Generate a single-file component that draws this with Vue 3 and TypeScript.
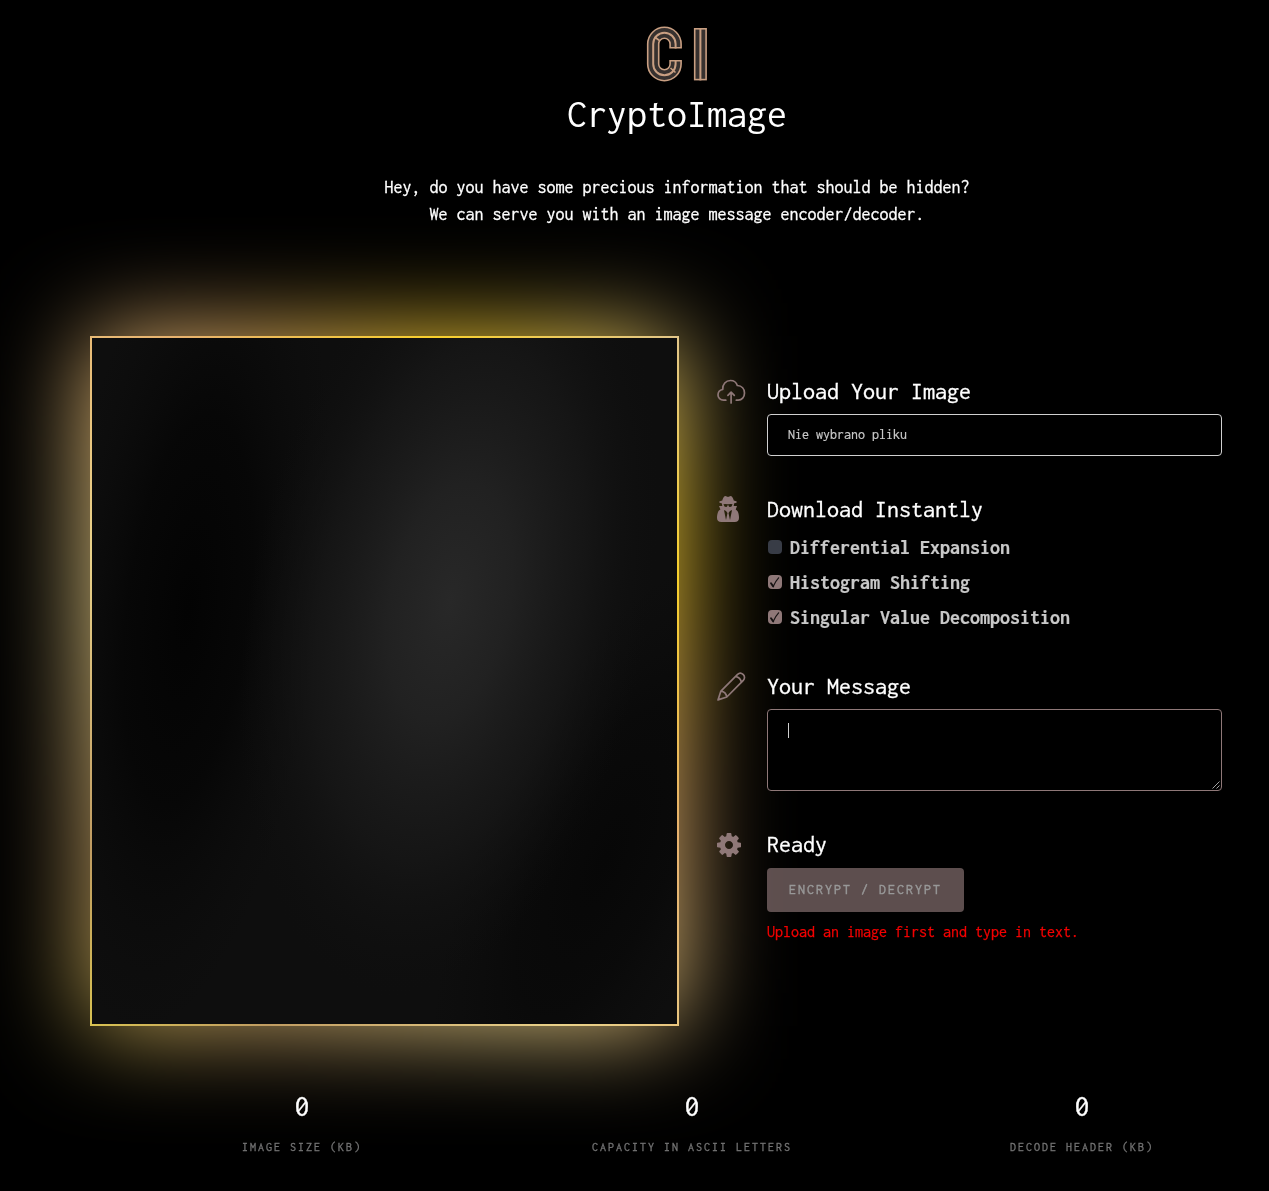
<script setup lang="ts">
import { ref } from 'vue'

interface Method {
  label: string
  checked: boolean
}

interface Stat {
  value: number
  label: string
}

const methods = ref<Method[]>([
  { label: 'Differential Expansion', checked: false },
  { label: 'Histogram Shifting', checked: true },
  { label: 'Singular Value Decomposition', checked: true },
])

const stats: Stat[] = [
  { value: 0, label: 'Image size (KB)' },
  { value: 0, label: 'Capacity in ASCII letters' },
  { value: 0, label: 'Decode header (KB)' },
]
</script>

<template>
  <div class="page">
    <header class="hero">
      <svg class="logo" width="64" height="58" viewBox="0 0 64 58" fill="none">
        <g stroke="#c99f82">
          <path d="M29.6 23.5V19A11.2 11.2 0 0 0 7.2 19V39A11.2 11.2 0 0 0 29.6 39V35" stroke-width="12.6" />
          <path d="M54.4 3V55.4" stroke-width="13" />
        </g>
        <g stroke="#37312f">
          <path d="M29.6 22V19A11.2 11.2 0 0 0 7.2 19V39A11.2 11.2 0 0 0 29.6 39V36.5" stroke-width="9.4" />
          <path d="M54.4 4.6V53.8" stroke-width="9.8" />
        </g>
        <g stroke="#c99f82" stroke-width="2">
          <path d="M29.6 23.5V19A11.2 11.2 0 0 0 7.2 19V39A11.2 11.2 0 0 0 29.6 39V35" />
          <path d="M54.4 3V55.4" />
          <path d="M8.5 12L13.5 15.5M24.5 43L29.5 47.5" stroke-width="1.6" />
        </g>
      </svg>
      <h1>CryptoImage</h1>
      <p>Hey, do you have some precious information that should be hidden?<br>We can serve you with an image message encoder/decoder.</p>
    </header>

    <main class="workspace">
      <div class="frame">
        <svg class="preview" width="585" height="686" viewBox="92 338 585 686">
          <defs>
            <radialGradient id="shine" gradientUnits="userSpaceOnUse" cx="0" cy="0" r="1" gradientTransform="translate(450 602) rotate(11) scale(200 400)">
              <stop offset="0" stop-color="#282828" />
              <stop offset=".3" stop-color="#212121" />
              <stop offset=".65" stop-color="#171717" stop-opacity=".8" />
              <stop offset="1" stop-color="#0f0f0f" stop-opacity="0" />
            </radialGradient>
            <radialGradient id="shadeLeft" gradientUnits="userSpaceOnUse" cx="0" cy="0" r="1" gradientTransform="translate(188 610) rotate(7) scale(135 430)">
              <stop offset="0" stop-color="#030303" />
              <stop offset=".45" stop-color="#050505" stop-opacity=".8" />
              <stop offset="1" stop-color="#0b0b0b" stop-opacity="0" />
            </radialGradient>
            <radialGradient id="shadeRight" gradientUnits="userSpaceOnUse" cx="0" cy="0" r="1" gradientTransform="translate(605 860) rotate(24) scale(125 330)">
              <stop offset="0" stop-color="#070707" />
              <stop offset=".5" stop-color="#080808" stop-opacity=".7" />
              <stop offset="1" stop-color="#0b0b0b" stop-opacity="0" />
            </radialGradient>
          </defs>
          <rect x="92" y="338" width="585" height="686" fill="#0e0e0e" />
          <rect x="92" y="338" width="585" height="686" fill="url(#shadeLeft)" />
          <rect x="92" y="338" width="585" height="686" fill="url(#shadeRight)" />
          <rect x="92" y="338" width="585" height="686" fill="url(#shine)" />
        </svg>
      </div>

      <div class="steps">
        <section class="step upload">
          <svg class="icon" width="29" height="28" viewBox="0 0 29 28" fill="none" stroke="#8f7878" stroke-width="1.7" stroke-linecap="round" stroke-linejoin="round">
            <path d="M8.8 22.2H6.5C3.3 22.2 1 19.8 1 16.9 1 14.2 3 12 5.7 11.5 5.4 6.3 8.9 2.5 13.4 2.5 16.9 2.5 19.4 4.4 20.3 7.5 24.8 7.8 27.5 10.9 27.5 15 27.5 19.2 24.8 22.2 21.2 22.2H19.3M14.1 25V14.3M10.9 17.3L14.1 14.1 17.3 17.3" />
          </svg>
          <div class="body">
            <h2>Upload Your Image</h2>
            <div class="file">Nie wybrano pliku</div>
          </div>
        </section>

        <section class="step methods">
          <svg class="icon" width="22" height="28" viewBox="0 0 1408 1792" fill="#8f7878">
            <path d="M576 1536l96-448-96-128-128-64zm256 0l128-640-128 64-96 128zm160-1010q-2-4-4-6-10-8-96-8-70 0-167 19-7 2-21 2t-21-2q-97-19-167-19-86 0-96 8-2 2-4 6 2 18 4 27 2 3 7.5 6.5t7.5 10.5q2 4 7.5 20.5t7 20.5 7.5 17 8.5 17 9 14 12 13.5 14 9.5 17.5 8 20.5 4 24.5 2q36 0 59-12.5t32.5-30 14.5-34.5 11.5-29.5 17.5-12.5h12q11 0 17.5 12.5t11.5 29.5 14.5 34.5 32.5 30 59 12.5q13 0 24.5-2t20.5-4 17.5-8 14-9.5 12-13.5 9-14 8.5-17 7.5-17 7-20.5 7.5-20.5q2-7 7.5-10.5t7.5-6.5q2-9 4-27zm416 879q0 121-73 190t-194 69h-874q-121 0-194-69t-73-190q0-61 4.5-118t19-125.5 37.5-123.5 63.5-103.5 93.5-74.5l-90-220h214q-22-64-22-128 0-12 2-32-194-40-194-96 0-57 210-99 17-62 51.5-134t70.5-114q32-37 76-37 30 0 84 31t84 31 84-31 84-31q44 0 76 37 36 42 70.5 114t51.5 134q210 42 210 99 0 56-194 96 7 81-20 160h214l-82 225q63 33 107.5 96.5t65.5 143.5 29 151.5 8 148.5z" />
          </svg>
          <div class="body">
            <h2>Download Instantly</h2>
            <label v-for="method in methods" :key="method.label" class="option" @click="method.checked = !method.checked">
              <span class="box" :class="{ on: method.checked }">
                <svg v-if="method.checked" width="14" height="14" viewBox="0 0 14 14" fill="none" stroke="#171313" stroke-linecap="round" stroke-linejoin="round">
                  <path d="M3 8.2L5.2 11.4" stroke-width="1.9" />
                  <path d="M5.3 11.3C6.5 8.4 8.2 5.4 10.6 2.8" stroke-width="1.2" />
                </svg>
              </span>
              {{ method.label }}
            </label>
          </div>
        </section>

        <section class="step message">
          <svg class="icon" width="29" height="30" viewBox="0 0 29 30" fill="none" stroke="#8f7878" stroke-width="1.7" stroke-linecap="round" stroke-linejoin="round">
            <path d="M1 27.9L3.9 19.1 20.6 2.4C22.2 .9 24.4 .9 26 2.4L26.3 2.7C27.9 4.3 27.9 6.7 26.3 8.3L9.8 25ZM3.9 19.1C6.8 19.5 9.3 21.9 9.8 25M18.7 4.4C21.4 5.1 23.8 7.5 24.4 10.3" />
          </svg>
          <div class="body">
            <h2>Your Message</h2>
            <div class="textarea">
              <i class="caret"></i>
              <svg class="grip" width="8" height="8" viewBox="0 0 8 8" fill="none" stroke="#b5b5b5" stroke-width=".9">
                <path d="M.5 7.5L7.5 .5M4.5 7.5L7.5 4.5" />
              </svg>
            </div>
          </div>
        </section>

        <section class="step ready">
          <svg class="icon" width="24" height="28" viewBox="0 0 1536 1792" fill="#8f7878">
            <path d="M1024 896q0-106-75-181t-181-75-181 75-75 181 75 181 181 75 181-75 75-181zm512-109v222q0 12-8 23t-20 13l-185 28q-19 54-39 91 35 50 107 138 10 12 10 25t-9 23q-27 37-99 108t-94 71q-12 0-26-9l-138-108q-44 23-91 38-16 136-29 186-7 28-36 28h-222q-14 0-24.5-8.5t-11.5-21.5l-28-184q-49-16-90-37l-141 107q-10 9-25 9-14 0-25-11-126-114-165-168-7-10-7-23 0-12 8-23 15-21 51-66.5t54-70.5q-27-50-41-99l-183-27q-13-2-21-12.5t-8-23.5v-222q0-12 8-23t19-13l186-28q14-46 39-92-40-57-107-138-10-12-10-24 0-10 9-23 26-36 98.5-107.5t94.5-71.5q13 0 26 10l138 107q44-23 91-38 16-136 29-186 7-28 36-28h222q14 0 24.5 8.5t11.5 21.5l28 184q49 16 90 37l142-107q9-9 24-9 13 0 25 10 129 119 165 170 7 8 7 22 0 12-8 23-15 21-51 66.5t-54 70.5q26 50 41 98l183 28q13 2 21 12.5t8 23.5z" />
          </svg>
          <div class="body">
            <h2>Ready</h2>
            <button class="submit" type="button" disabled>Encrypt / Decrypt</button>
            <p class="error">Upload an image first and type in text.</p>
          </div>
        </section>
      </div>
    </main>

    <footer class="stats">
      <div v-for="stat in stats" :key="stat.label" class="stat">
        <strong>{{ stat.value }}</strong>
        <span>{{ stat.label }}</span>
      </div>
    </footer>
  </div>
</template>

<style>
html,
body {
  background: #000;
}
</style>

<style scoped>
.page {
  box-sizing: border-box;
  width: 1269px;
  height: 1191px;
  overflow: hidden;
  background: #000;
  color: #fff;
  font-family: Inconsolata, "DejaVu Sans Mono", "Liberation Mono", monospace;
  isolation: isolate;
}

.page *,
.page *::before {
  box-sizing: border-box;
}

.hero {
  display: flex;
  flex-direction: column;
  align-items: center;
  height: 336px;
  padding: 25px 0 0 85px;
  will-change: transform;
}

.logo {
  display: block;
  margin-left: 1px;
}

h1 {
  margin: 6px 0 0;
  font-size: 40px;
  font-weight: 400;
  line-height: 50px;
}

.hero p {
  margin: 35px 0 0;
  font-size: 18px;
  line-height: 27px;
  text-align: center;
  white-space: nowrap;
  -webkit-text-stroke: .3px currentColor;
}

.workspace {
  display: flex;
  height: 690px;
  padding-left: 90px;
}

.frame {
  position: relative;
  flex: none;
  width: 589px;
  height: 690px;
  padding: 2px;
  background: linear-gradient(45deg, #d8c252 0%, #c09c62 14%, #ead28a 37%, #e8b26e 61%, #f8d02c 81%, #e2c68a 100%);
}

.frame::before {
  content: "";
  position: absolute;
  inset: 0;
  z-index: -1;
  background: inherit;
  filter: blur(50px);
}

.preview {
  display: block;
}

.steps {
  position: relative;
  width: 505px;
  margin-left: 38px;
  padding-top: 41px;
  will-change: transform;
}

.step {
  display: flex;
}

.step.upload {
  height: 118px;
}

.step.methods {
  height: 177px;
}

.step.message {
  height: 158px;
}

.icon {
  flex: none;
  margin-top: 1px;
}

.message .icon {
  margin-top: 0;
}

.body {
  width: 455px;
  margin-left: auto;
}

h2 {
  margin: 0;
  font-size: 24px;
  font-weight: 400;
  line-height: 28px;
  white-space: nowrap;
  -webkit-text-stroke: .3px currentColor;
}

.file,
.textarea {
  border-radius: 4px;
  background: #000;
}

.file {
  height: 42px;
  margin-top: 9px;
  padding-left: 20px;
  border: 1px solid #d0d0d0;
  color: #c8c8c8;
  font-size: 14px;
  line-height: 40px;
  -webkit-text-stroke: .2px currentColor;
}

.option {
  display: flex;
  align-items: center;
  height: 35px;
  color: #c8c8c8;
  font-size: 20px;
  font-weight: 700;
  white-space: nowrap;
  -webkit-text-stroke: .2px currentColor;
}

h2 + .option {
  margin-top: 7px;
}

.box {
  flex: none;
  width: 14px;
  height: 14px;
  margin: -1px 8px 0 1px;
  border-radius: 4px;
  background: #383c46;
}

.box.on {
  background: #8f7878;
}

.box svg {
  display: block;
}

.textarea {
  position: relative;
  height: 82px;
  margin-top: 9px;
  padding: 13px 20px;
  border: 1px solid #8f7878;
}

.caret {
  display: block;
  width: 1px;
  height: 15px;
  background: #d0d0d0;
}

.grip {
  position: absolute;
  right: 1px;
  bottom: 1px;
}

.submit {
  display: block;
  width: 197px;
  height: 44px;
  margin-top: 10px;
  padding: 0;
  border: 0;
  border-radius: 4px;
  background: rgba(143, 120, 120, .65);
  color: #989898;
  font-family: inherit;
  font-size: 14px;
  letter-spacing: 2px;
  line-height: 44px;
  text-transform: uppercase;
  white-space: nowrap;
  -webkit-text-stroke: .4px currentColor;
}

.error {
  margin: 10px 0 0;
  color: #f40000;
  font-size: 16px;
  line-height: 20px;
  white-space: nowrap;
  -webkit-text-stroke: .25px currentColor;
}

.stats {
  position: relative;
  display: grid;
  grid-template-columns: repeat(3, 390px);
  width: 1170px;
  margin-left: 107px;
  padding-top: 64px;
  will-change: transform;
}

.stat {
  display: flex;
  flex-direction: column;
  align-items: center;
}

.stat strong {
  font-size: 30px;
  font-weight: 400;
  line-height: 32px;
  -webkit-text-stroke: .3px currentColor;
}

.stat span {
  margin-top: 15px;
  color: #747474;
  font-size: 12px;
  letter-spacing: 2px;
  line-height: 20px;
  text-transform: uppercase;
  white-space: nowrap;
  -webkit-text-stroke: .3px currentColor;
}
</style>
